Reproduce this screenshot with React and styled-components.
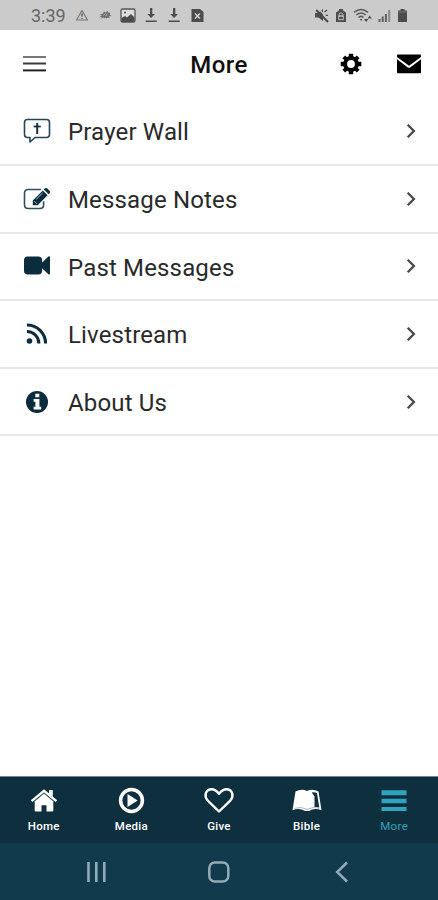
import React from "react";
import styled, { createGlobalStyle } from "styled-components";

const GlobalStyle = createGlobalStyle`
  * { box-sizing: border-box; }
  body { margin: 0; background: #fff; font-family: Roboto, "Noto Sans", sans-serif; }
  svg { display: block; flex: none; }
`;

const Screen = styled.div`
  width: 438px;
  height: 900px;
  display: flex;
  flex-direction: column;
  background: #fff;
  overflow: hidden;
`;

const StatusBar = styled.header`
  height: 30px;
  flex: none;
  display: flex;
  justify-content: space-between;
  align-items: center;
  padding: 0 30px 0 31px;
  background: #cbcbcb;
  color: #4c4c4c;
`;

const StatusGroup = styled.div`
  display: flex;
  align-items: center;
  gap: 6px;
`;

const Notifications = styled.div`
  display: grid;
  grid-template-columns: 39.5px repeat(6, 23px);
  align-items: center;
  justify-items: center;
`;

const Clock = styled.span`
  justify-self: start;
  padding-top: 1px;
  font-size: 18px;
  line-height: 30px;
  color: #666;
  white-space: nowrap;
`;

const TitleBar = styled.div`
  height: 68.4px;
  flex: none;
  display: grid;
  grid-template-columns: 1fr auto 1fr;
  align-items: center;
  padding: 0 17px 0 23px;
`;

const Title = styled.h1`
  margin: 1px 6px 0 0;
  font-size: 24px;
  line-height: 30px;
  font-weight: 500;
  letter-spacing: 0.4px;
  color: #111;
`;

const Actions = styled.div`
  display: flex;
  justify-content: flex-end;
  align-items: center;
  gap: 35px;
`;

const List = styled.ul`
  list-style: none;
  margin: 0;
  padding: 0;
  flex: 1;
`;

const Row = styled.li`
  height: 67.6px;
  display: flex;
  align-items: center;
  padding: 0 19px 0 22px;
  border-bottom: 2px solid #e8e8e8;
  color: #0b2c3d;
`;

const RowLabel = styled.span`
  flex: 1;
  margin-left: 16px;
  padding-top: 2.6px;
  font-size: 24px;
  line-height: 30px;
  font-weight: 400;
  letter-spacing: 0.16px;
  color: #2a2a2a;
`;

const TabBar = styled.nav`
  height: 66px;
  flex: none;
  display: grid;
  grid-template-columns: repeat(5, 1fr);
  background: #0e2f3e;
  box-shadow: 0 -1px 0 #71858f;
`;

const Tab = styled.div`
  display: flex;
  flex-direction: column;
  align-items: center;
  padding-top: 9px;
  color: ${(p) => (p.$active ? "#32a3bd" : "#fff")};
`;

const TabLabel = styled.span`
  margin-top: 3px;
  font-size: 11.5px;
  line-height: 14px;
  font-weight: ${(p) => (p.$active ? 400 : 500)};
  letter-spacing: ${(p) => (p.$active ? 0.35 : 0.25)}px;
`;

const SystemNav = styled.div`
  height: 57px;
  flex: none;
  display: flex;
  justify-content: space-between;
  align-items: center;
  padding: 1px 82px 0 82px;
  background: #123a4d;
  color: #92abb7;
`;

const Glyph = ({ w, h, children, ...rest }) => (
  <svg width={w} height={h} viewBox={`0 0 ${w} ${h}`} fill="currentColor" aria-hidden="true" {...rest}>
    {children}
  </svg>
);

const stroked = { fill: "none", stroke: "currentColor", strokeLinejoin: "round" };

const Warning = () => (
  <Glyph w={14} h={14}>
    <path d="M7 2.500 12.500 12H1.500Z" {...stroked} stroke="#777" strokeWidth="1.200" />
    <path d="M7 5.500v3M7 9.700v1" stroke="#555" strokeWidth="1.300" />
  </Glyph>
);
const Hand = () => (
  <Glyph w={14} h={14}>
    <path d="M.5 9.500 4 7.500 1.500 7 5 5.500 6 3.500l1.500 1L9.500 3l.7 1.600 2 .2-.4 1.700L13.500 8l-2.500.3.6 1.700-2-.3-1 .9-1-1-1.600 1-.6-1.400-2 1.500.2-1.900Z" fill="#707070" />
    <path d="m5.500 7.500 2-2M8 8l1-2" stroke="#ccc" strokeWidth=".7" />
  </Glyph>
);
const Picture = () => (
  <Glyph w={16} h={15}>
    <rect x="1" y="1" width="14" height="13" rx="1.500" fill="#ddd" stroke="#555" strokeWidth="1.300" />
    <circle cx="5" cy="4.500" r="1" />
    <path d="M1.500 10 5 8l2 1.500L11 6l3.500 3.500V14h-13Z" />
  </Glyph>
);
const Download = () => (
  <Glyph w={12} h={16}>
    <path d="M5 1h2.300v6H10l-3.900 4-3.800-4H5ZM.7 13.500h11V15H.7Z" />
  </Glyph>
);
const FileX = () => (
  <Glyph w={13} h={15}>
    <path d="M.5 1H9l3.500 3v10H.5Z" />
    <path d="m4 5.500 5 5m0-5-5 5" stroke="#d5d5d5" strokeWidth="1.500" />
  </Glyph>
);
const Mute = () => (
  <Glyph w={14} h={15}>
    <path d="M0 5h3.500L8 1v12L3.500 9.500H0Z" />
    <path d="M9.500 4 12 2M9.700 7.300H13" stroke="currentColor" strokeWidth="1.300" />
    <path d="m3 0 11 12" stroke="#cbcbcb" strokeWidth="1.200" />
    <path d="m1.200 2 11.800 12" stroke="currentColor" strokeWidth="2" />
  </Glyph>
);
const BatterySaver = () => (
  <Glyph w={12} h={15}>
    <path d="M4 1h4v1.500l3 2V14H1V4.500l3-2Z" />
    <path d="M6 4.800a2 2 0 0 1 2 2V8H4V6.800a2 2 0 0 1 2-2ZM3.700 8h4.600v3.700H3.700Z" fill="none" stroke="#ccc" strokeWidth=".9" />
  </Glyph>
);
const Wifi = () => (
  <Glyph w={19} h={15}>
    <g {...stroked} strokeWidth="1.500" stroke="#5c5c5c">
      <path d="M1 4.300q7-5.700 14 0M3.300 7q4.700-4 9.400 0M5.500 9.500q2.500-2.200 5 0" />
    </g>
    <path d="M6.700 11h2.700L8 13Z" />
    <path d="M11 11h4.400l-2.200 3ZM14.600 10.500h4.200l-2.100-3Z" />
  </Glyph>
);
const Signal = () => (
  <Glyph w={13} h={15}>
    <path d="M.5 11h2v3h-2ZM3.700 8.500h2V14h-2ZM6.900 6h2v8h-2Z" fill="#606060" />
    <path d="M10.200 2h2v12h-2Z" fill="#888" />
  </Glyph>
);
const Battery = () => (
  <Glyph w={11} h={15}>
    <path d="M3.500 1h4v1.500H10V14H1V2.500h2.500Z" />
    <path d="M1 4h9" stroke="#777" strokeWidth="1" />
  </Glyph>
);

const MenuLines = () => (
  <Glyph w={23} h={18}>
    <path d="M0 2h23" stroke="#777" strokeWidth="2" />
    <path d="M0 8.500h23" stroke="#3b3b3b" strokeWidth="2" />
    <path d="M0 15.400h23" stroke="#222" strokeWidth="2" />
  </Glyph>
);
const Gear = () => (
  <Glyph w={22} h={22} color="#000">
    <g stroke="currentColor" strokeWidth="4.400">
      <path d="M11 .7v4M11 17.300v4M.7 11h4M17.300 11h4" />
      <path d="m3.800 3.800 3 3m8.400 8.400 3 3m0-14.400-3 3m-8.400 8.400-3 3" strokeWidth="4" />
    </g>
    <circle cx="11" cy="11" r="5.900" fill="none" stroke="currentColor" strokeWidth="4" />
  </Glyph>
);
const Mail = () => (
  <Glyph w={24} h={20} color="#000">
    <path d="M.8.500h22.400q.8 0 .8.800V3L12 11.800 0 3V1.300Q0 .5.800.5Z" />
    <path d="m0 5.200 10.500 8q1.500 1 3 0L24 5.200V18.400q0 .8-.8.8H.8q-.8 0-.8-.8Z" />
  </Glyph>
);

const Prayer = () => (
  <Glyph w={30} h={30}>
    <path d="M5.500 3.500h19q3 0 3 3v12q0 3-3 3H13L8 26v-4.500H5.500q-3 0-3-3v-12q0-3 3-3Z" {...stroked} strokeWidth="1.600" stroke="#274455" />
    <path d="M15.200 7v11" stroke="currentColor" strokeWidth="1.900" />
    <path d="M11.600 10.500h7.200" stroke="currentColor" strokeWidth="1.700" />
  </Glyph>
);
const Edit = () => (
  <Glyph w={30} h={30}>
    <path d="M19 5.500H6.300q-3.800 0-3.800 3.800v11.400q0 3.800 3.800 3.800h11.500q3.800 0 3.800-3.800v-3.500" {...stroked} strokeWidth="1.600" stroke="#334f5e" />
    <path d="m20.800 6.500 4.800 4.800L15.600 21.300h-4.800v-4.800ZM21.800 5.500l1.200-1.200q1-.8 2 0l2.800 2.800q.8 1 0 2l-1.200 1.200Z" />
    <path d="m20.500 9-6.300 6.300M12.300 17.200l2.600 2.600" stroke="#dfe5e8" strokeWidth=".8" />
  </Glyph>
);
const Video = () => (
  <Glyph w={30} h={30}>
    <path d="M5.800 5.500h10.500q3.800 0 3.800 3.800v2.300l6.300-6q1.600-.8 1.600.8v16.100q0 1.500-1.600.8l-6.300-6v2.400q0 3.800-3.800 3.800H5.800Q2 23.500 2 19.700V9.300Q2 5.500 5.800 5.500Z" />
  </Glyph>
);
const Feed = () => (
  <Glyph w={30} h={30}>
    <circle cx="7.500" cy="22" r="2.800" />
    <path d="M4.900 12.500a12 12 0 0 1 12 12M4.900 5.900a18.700 18.700 0 0 1 18.700 18.700" fill="none" stroke="currentColor" strokeWidth="3" />
  </Glyph>
);
const Info = () => (
  <Glyph w={30} h={30}>
    <circle cx="15" cy="15" r="11" />
    <path d="M13.300 6.700h4v3.500h-4ZM11.600 12h5.800v7.700h1.800v2.700h-7.600v-2.700h1.800v-5h-1.800Z" fill="#fff" />
  </Glyph>
);
const Chevron = () => (
  <Glyph w={14} h={18}>
    <path d="m2.700 2.800 6.200 6.200-6.200 6.200" fill="none" stroke="#484848" strokeWidth="2.300" />
  </Glyph>
);

const Home = () => (
  <Glyph w={30} h={30}>
    <path d="M15 7.500 24.300 15.500v9.100q0 .8-.8.800h-6v-6.200h-5v6.200H6.500q-.8 0-.8-.8v-9.100Z" />
    <path d="m2.600 15.200 12.400-10.300 12.400 10.300" fill="none" stroke="currentColor" strokeWidth="2.400" />
    <path d="M20 4h3.800v9L20 9.700Z" />
    <path d="m5 15.800 10-8.300 10 8.300" fill="none" stroke="#8496a0" strokeWidth=".5" />
  </Glyph>
);
const Play = () => (
  <Glyph w={30} h={30}>
    <circle cx="15.500" cy="14.500" r="10.900" fill="none" stroke="currentColor" strokeWidth="3.500" />
    <path d="m11.500 8 10.200 6.500L11.500 21Z" />
  </Glyph>
);
const Heart = () => (
  <Glyph w={32} h={30}>
    <path d="M16 25.500 4.500 14.300C.9 10.200 2.400 3.200 8.700 3.200c3.500 0 5.300 2 7.300 4.500 2-2.500 3.800-4.500 7.300-4.500 6.300 0 7.800 7 4.200 11.100Z" {...stroked} strokeWidth="2.400" />
  </Glyph>
);
const Book = () => (
  <Glyph w={32} h={30}>
    <path d="M4.500 5.500Q10.500 2.500 16 5q5.500-2.500 11.500.5L30.500 24.200q-7-3-12.500.8h-4q-5.500-3.800-12.500-.8Z" />
    <path d="M20.800 6.500q2.700-.5 5.200.7l2.300 14.300q-2.700-.7-4.800-.3V10.500Z" fill="#0e2f3e" />
    <path d="M3.500 22.300q6.500-2 12.500 1 6-3 12.500-1" fill="none" stroke="#89979e" strokeWidth=".7" />
  </Glyph>
);
const Bars = () => (
  <Glyph w={30} h={30}>
    <path d="M2.500 4.200h25v5h-25ZM2.500 12.700h25v4.500h-25ZM2.500 20.900h25v4.200h-25Z" />
  </Glyph>
);

const Recents = () => (
  <Glyph w={28} h={28}>
    <path d="M6.500 4v20M14.300 4v20M22.300 4v20" stroke="currentColor" strokeWidth="2.600" />
  </Glyph>
);
const SystemHome = () => (
  <Glyph w={28} h={28}>
    <rect x="4.300" y="4.600" width="19" height="19" rx="5.500" {...stroked} strokeWidth="2.500" />
  </Glyph>
);
const Back = () => (
  <Glyph w={28} h={28}>
    <path d="M19 4.500 9.200 14 19 23.500" fill="none" stroke="currentColor" strokeWidth="2.500" />
  </Glyph>
);

const items = [
  { label: "Prayer Wall", Icon: Prayer },
  { label: "Message Notes", Icon: Edit },
  { label: "Past Messages", Icon: Video },
  { label: "Livestream", Icon: Feed },
  { label: "About Us", Icon: Info },
];

const tabs = [
  { label: "Home", Icon: Home },
  { label: "Media", Icon: Play },
  { label: "Give", Icon: Heart },
  { label: "Bible", Icon: Book },
  { label: "More", Icon: Bars, active: true },
];

export default function App() {
  return (
    <>
      <GlobalStyle />
      <Screen>
        <StatusBar>
          <Notifications>
            <Clock>3:39</Clock>
            <Warning />
            <Hand />
            <Picture />
            <Download />
            <Download />
            <FileX />
          </Notifications>
          <StatusGroup>
            <Mute />
            <BatterySaver />
            <Wifi />
            <Signal />
            <Battery />
          </StatusGroup>
        </StatusBar>
        <TitleBar>
          <MenuLines />
          <Title>More</Title>
          <Actions>
            <Gear />
            <Mail />
          </Actions>
        </TitleBar>
        <List>
          {items.map(({ label, Icon }) => (
            <Row key={label}>
              <Icon />
              <RowLabel>{label}</RowLabel>
              <Chevron />
            </Row>
          ))}
        </List>
        <TabBar>
          {tabs.map(({ label, Icon, active }) => (
            <Tab key={label} $active={active}>
              <Icon />
              <TabLabel $active={active}>{label}</TabLabel>
            </Tab>
          ))}
        </TabBar>
        <SystemNav>
          <Recents />
          <SystemHome />
          <Back />
        </SystemNav>
      </Screen>
    </>
  );
}
